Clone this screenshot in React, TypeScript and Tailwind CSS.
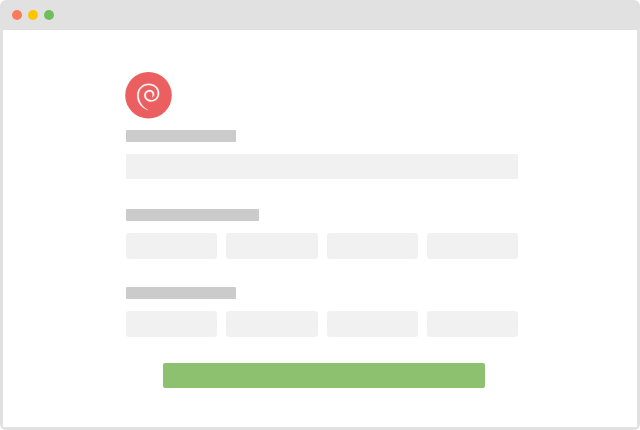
import React from "react";

type FieldGroupProps = {
  id: string;
  title: string;
  barClass: string;
  fieldClass: string;
  count: number;
};

function FieldGroup({ id, title, barClass, fieldClass, count }: FieldGroupProps) {
  const fields = Array.from({ length: count }, (_, i) => i + 1);
  return (
    <div role="group" aria-labelledby={`${id}-label`}>
      <label
        id={`${id}-label`}
        htmlFor={`${id}-1`}
        aria-label={title}
        className={`block h-3 rounded-[1px] bg-[#cbcbcb] ${barClass}`}
      />
      <div className={`mt-3 grid gap-[9px] ${count > 1 ? "grid-cols-4" : "grid-cols-1"}`}>
        {fields.map((n) => (
          <input
            key={n}
            id={`${id}-${n}`}
            type="text"
            aria-label={`${title} ${n}`}
            className={`block w-full min-w-0 bg-[#f1f1f1] px-2 text-sm outline-none ${fieldClass}`}
          />
        ))}
      </div>
    </div>
  );
}

function Logo() {
  return (
    <svg viewBox="0 0 47 47" className="-ml-px block size-[47px]" role="img" aria-label="Spiral logo">
      <circle cx="23.5" cy="23.3" r="23.3" fill="#eb5f60" />
      <path
        d="M23 38C16.2 35.8 12.1 30.2 12.2 23.2C12.4 16.3 17.4 11.7 23.6 11.7C29.8 11.7 34.2 15.8 34.2 21.1C34.2 26 30.9 29.6 26.4 29.6C22.3 29.6 19.3 26.8 19.3 23.4C19.3 20.3 21.6 18 24.6 18C27.3 18 29.3 19.9 29.2 22.3C29.1 23.7 28.3 24.8 27.2 25.3C28.5 22.2 27.3 19.6 24.6 19.6C22.5 19.6 20.8 21.1 20.8 23.3C20.8 26 23.3 28.2 26.4 28.2C30 28.2 32.7 25.3 32.7 21.1C32.7 16.7 28.9 13.1 23.6 13.1C18 13.1 13.8 17.3 13.7 23.2C13.6 29.4 17.3 34.9 23 38Z"
        fill="#fff"
        stroke="#fff"
        strokeWidth="0.3"
        strokeLinejoin="round"
      />
    </svg>
  );
}

export default function App() {
  return (
    <div className="flex min-h-screen flex-col overflow-hidden rounded-md bg-[#e1e1e1] px-[3px] pb-[3px] font-['Liberation_Sans',sans-serif]">
      <header className="flex h-[30px] items-center gap-1.5 px-[9px]">
        <span className="size-2.5 rounded-full bg-[#fb7b5b]" />
        <span className="size-2.5 rounded-full bg-[#ffc400]" />
        <span className="size-2.5 rounded-full bg-[#6dbf5b]" />
      </header>
      <main className="flex grow justify-center bg-white pt-[42px] pb-[39px] pl-1">
        <form className="w-full max-w-[392px]" onSubmit={(e) => e.preventDefault()}>
          <Logo />
          <div className="mt-[11px]">
            <FieldGroup id="name" title="Name" count={1} barClass="w-[110px]" fieldClass="h-[25px] rounded-[1px]" />
          </div>
          <div className="mt-[30px] space-y-7">
            <FieldGroup id="number" title="Number" count={4} barClass="w-[133px]" fieldClass="h-[26px] rounded-[3px]" />
            <FieldGroup id="code" title="Code" count={4} barClass="w-[110px]" fieldClass="h-[26px] rounded-[3px]" />
          </div>
          <div className="mt-[26px] flex justify-center pl-1">
            <button type="submit" aria-label="Submit" className="h-[25px] w-full max-w-[322px] rounded-[2px] bg-[#8dc16f]" />
          </div>
        </form>
      </main>
    </div>
  );
}
